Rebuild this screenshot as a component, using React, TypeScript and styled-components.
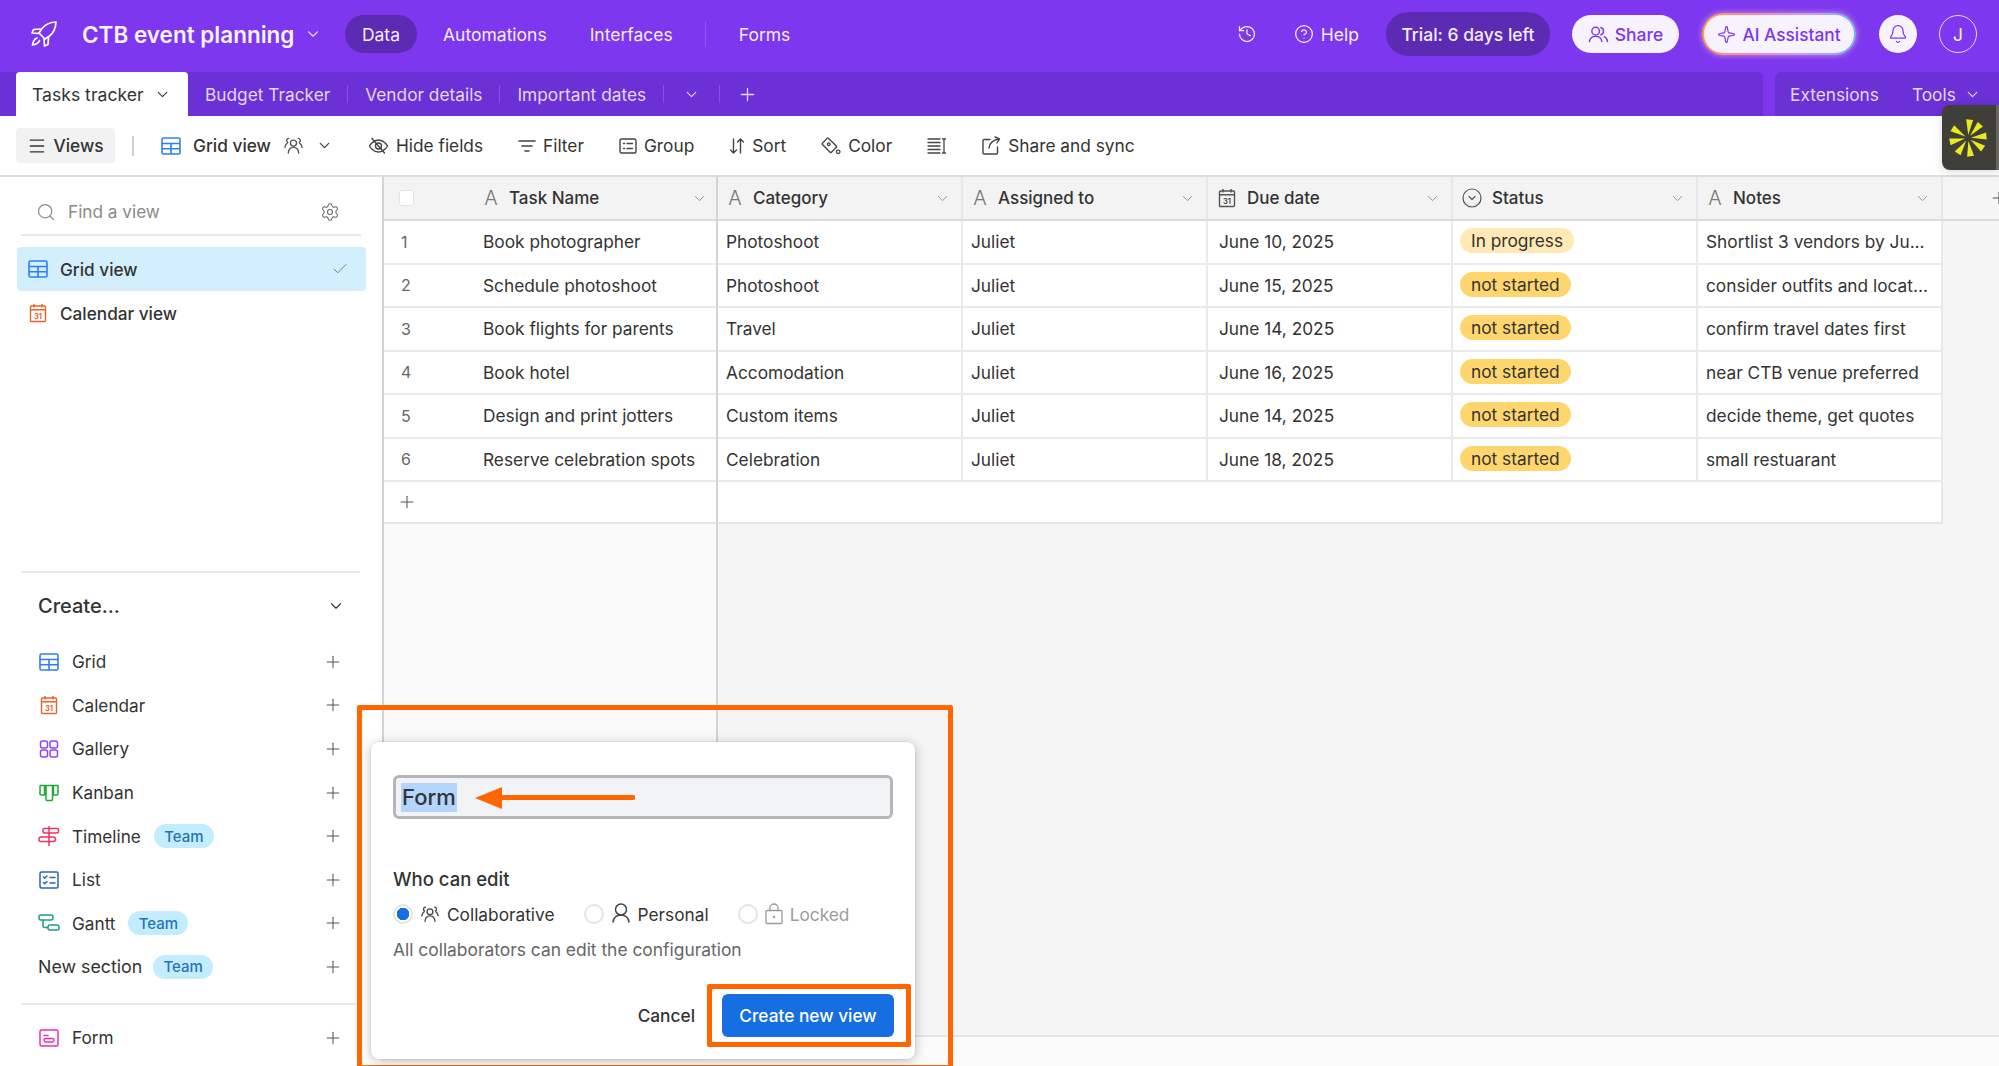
import React from "react";
import styled, { createGlobalStyle } from "styled-components";
import {
  Bell,
  Check,
  ChevronDown,
  CircleHelp,
  History,
  Menu,
  Plus,
  Search,
  Settings,
  Sparkle,
} from "lucide-react";

const GlobalStyle = createGlobalStyle`
  html, body {
    margin: 0;
    height: 100%;
    overflow: hidden;
    font-family: Inter, "Liberation Sans", sans-serif;
    color: #333;
  }
  * { box-sizing: border-box; }
`;

/* ---------- drawn icons ---------- */

const RocketLogo = () => (
  <svg width="28" height="28" viewBox="0 0 28 28" fill="none" stroke="#fff" strokeWidth="1.7" strokeLinejoin="round" strokeLinecap="round">
    <path d="M26 2c-6 .3-10.500 2-14 6.500L9 13l6 6 4.500-3C24 12.500 25.700 8 26 2Z" />
    <path d="M10.500 9 3.500 9.500 2 13l7 0.500" />
    <path d="M18.500 17.500 18 24.500 14.500 26l-.5-7" />
    <path d="M7 18c-2.500 1-4 3.500-4.500 7C6 24.500 8.500 23 9.500 20.500" />
  </svg>
);

const Collab = ({ size = 21, color = "#555" }: { size?: number; color?: string }) => (
  <svg width={size} height={size} viewBox="0 0 22 22" fill="none" stroke={color} strokeWidth="1.4" strokeLinecap="round" strokeLinejoin="round">
    <circle cx="11" cy="8.500" r="3.200" />
    <path d="M5.500 19c.3-3.500 2.500-6 5.500-6s5.200 2.500 5.500 6" />
    <path d="M6 3.500a2.300 2.300 0 0 0-1 4.300M2 13c.3-2 1.200-3.500 2.500-4.300" />
    <path d="M16 3.500a2.300 2.300 0 0 1 1 4.300M20 13c-.3-2-1.200-3.500-2.500-4.300" />
  </svg>
);

const PersonGlyph = () => (
  <svg width="20" height="24" viewBox="0 0 20 24" fill="none" stroke="#444" strokeWidth="1.500" strokeLinecap="round">
    <circle cx="10" cy="7.500" r="5.500" />
    <path d="M2 20c.8-4.500 3.800-7 8-7s7.200 2.500 8 7" />
  </svg>
);

const LockGlyph = () => (
  <svg width="18" height="24" viewBox="0 0 18 24" fill="none" stroke="#9b9b9b" strokeWidth="1.300" strokeLinecap="round">
    <rect x="1" y="8.500" width="16" height="13" rx="1" />
    <path d="M5 8.500V6a4 4 0 0 1 8 0v2.500" />
    <circle cx="9" cy="15" r=".6" fill="#9b9b9b" />
  </svg>
);

const ShareUsers = () => (
  <svg width="21" height="18" viewBox="0 0 22 18" fill="none" stroke="#7c37ef" strokeWidth="1.5" strokeLinecap="round">
    <circle cx="8" cy="6" r="4" />
    <path d="M1.500 17c.4-3.500 3-5.500 6.500-5.500s6.100 2 6.500 5.500" />
    <path d="M13.500 2.200a4 4 0 0 1 0 7.600M17 11.800c2 .9 3.200 2.700 3.500 5.200" />
  </svg>
);

const GridGlyph = ({ size = 20 }: { size?: number }) => (
  <svg width={size} height={size} viewBox="0 0 20 20" fill="none" stroke="#2d7ff9" strokeWidth="1.600">
    <rect x="1" y="2" width="18" height="16" rx="1.500" />
    <path d="M1 7.500h18M1 12.700h18M10 7.500V18" />
  </svg>
);

const CalendarGlyph = ({ color = "#e8622c", size = 20 }: { color?: string; size?: number }) => (
  <svg width={size} height={size} viewBox="0 0 20 20" fill="none" stroke={color} strokeWidth="1.400">
    <rect x="2.500" y="3" width="15" height="15.500" rx="1" />
    <path d="M2.500 6.800h15M6 1v3.500M14 1v3.500" />
    <text x="10" y="15.800" textAnchor="middle" fontSize="7.500" fontWeight="700" fill={color} stroke="none" fontFamily="Inter, sans-serif">31</text>
  </svg>
);

const GalleryGlyph = () => (
  <svg width="20" height="20" viewBox="0 0 20 20" fill="none" stroke="#8b46ff" strokeWidth="1.500">
    <rect x="1.500" y="2" width="7" height="7" rx="2" />
    <rect x="11" y="2" width="7.500" height="7" rx="2" />
    <rect x="1.500" y="11" width="7" height="7" rx="2" />
    <rect x="11" y="11" width="7.500" height="7" rx="2" />
  </svg>
);

const KanbanGlyph = () => (
  <svg width="20" height="20" viewBox="0 0 20 20" fill="none" stroke="#20a933" strokeWidth="1.500" strokeLinejoin="round">
    <path d="M1 2.500h18v8.500a1 1 0 0 1-1 1h-3.500V2.500M5.500 2.500V12H2a1 1 0 0 1-1-1V2.500M7 2.500v14a1 1 0 0 0 1 1h4.500a1 1 0 0 0 1-1v-14" />
  </svg>
);

const TimelineGlyph = () => (
  <svg width="22" height="22" viewBox="0 0 22 22" fill="none" stroke="#f0325f" strokeWidth="1.500" strokeLinejoin="round">
    <path d="M11 1v20" />
    <rect x="5" y="3.500" width="15.500" height="4.500" rx="1.500" />
    <path d="M1 14.500a2 2 0 0 1 2-2.500h12.500a2 2 0 0 1 2 2.200 2 2 0 0 1-2 2.300H3a2 2 0 0 1-2-2Z" />
  </svg>
);

const ListGlyph = () => (
  <svg width="20" height="20" viewBox="0 0 20 20" fill="none" stroke="#2f5fc4" strokeWidth="1.500" strokeLinecap="round">
    <rect x="1" y="2" width="18" height="16" rx="1.500" />
    <path d="m4.500 7 1.200 1.200L8 6M4.500 12.500l1.200 1.200 2.300-2.200M11 7.500h5M11 13h5" />
  </svg>
);

const GanttGlyph = () => (
  <svg width="22" height="20" viewBox="0 0 22 20" fill="none" stroke="#1f9b8e" strokeWidth="1.500">
    <rect x="1" y="2" width="14" height="5" rx="2" />
    <rect x="10" y="12" width="11" height="5" rx="2" />
    <path d="M5 7v5.500a2 2 0 0 0 2 2h3" />
  </svg>
);

const FormGlyph = () => (
  <svg width="20" height="20" viewBox="0 0 20 20" fill="none" stroke="#ec2fb4" strokeWidth="1.500" strokeLinecap="round">
    <rect x="1" y="2" width="18" height="16" rx="1.500" />
    <path d="M5 7.500h4" />
    <rect x="5" y="10.500" width="10" height="3.500" rx="1.700" />
  </svg>
);

const HideGlyph = () => (
  <svg width="21" height="20" viewBox="0 0 21 20" fill="none" stroke="#444" strokeWidth="1.400" strokeLinecap="round">
    <path d="M1.500 10s3.200-6 9-6 9 6 9 6-3.200 6-9 6-9-6-9-6Z" />
    <circle cx="10.500" cy="10" r="3" />
    <path d="M4 2.500 16.500 17" />
  </svg>
);

const FilterGlyph = () => (
  <svg width="18" height="16" viewBox="0 0 18 16" fill="none" stroke="#444" strokeWidth="1.600" strokeLinecap="round">
    <path d="M1 3h16M4 8h10M7 13h4" />
  </svg>
);

const GroupGlyph = () => (
  <svg width="18" height="18" viewBox="0 0 18 18" fill="none" stroke="#444" strokeWidth="1.400" strokeLinecap="round">
    <rect x="1" y="2" width="16" height="14" rx="1.500" />
    <path d="M4.500 6.500h1M8 6.500h5.500M4.500 11.500h1M8 11.500h5.500" />
  </svg>
);

const SortGlyph = () => (
  <svg width="16" height="18" viewBox="0 0 16 18" fill="none" stroke="#444" strokeWidth="1.400" strokeLinecap="round" strokeLinejoin="round">
    <path d="M4.500 2v14M1.500 13l3 3 3-3M11.500 16V2M8.500 5l3-3 3 3" />
  </svg>
);

const ColorGlyph = () => (
  <svg width="20" height="18" viewBox="0 0 22 20" fill="none" stroke="#444" strokeWidth="1.500" strokeLinejoin="round">
    <path d="M6.500 1.500 1.500 7a1 1 0 0 0 0 1.400l8.500 8.600a1 1 0 0 0 1.400 0l5.600-5.500a1 1 0 0 0 0-1.400L8 1.500a1 1 0 0 0-1.500 0Z" />
    <circle cx="8.500" cy="8" r="1.500" />
    <circle cx="19" cy="16.500" r="2" />
  </svg>
);

const RowHeightGlyph = () => (
  <svg width="20" height="18" viewBox="0 0 20 18" fill="none" stroke="#444" strokeWidth="1.300" strokeLinecap="round">
    <path d="M1 2h12M1 5.500h12M1 9h12M1 12.500h12M1 16h12M17 2v14M15.500 2h3M15.500 16h3" />
  </svg>
);

const ShareGlyph = () => (
  <svg width="19" height="19" viewBox="0 0 19 19" fill="none" stroke="#444" strokeWidth="1.400" strokeLinecap="round" strokeLinejoin="round">
    <path d="M8 3.500H2a1 1 0 0 0-1 1V17a1 1 0 0 0 1 1h12.500a1 1 0 0 0 1-1v-6" />
    <path d="M7 12c.5-4.500 3.500-8 10-9M13 1l4.500 2L15 7" />
  </svg>
);

const StatusGlyph = () => (
  <svg width="20" height="20" viewBox="0 0 20 20" fill="none" stroke="#555" strokeWidth="1.200" strokeLinecap="round" strokeLinejoin="round">
    <circle cx="10" cy="10" r="9" />
    <path d="m7 8.500 3 3 3-3" />
  </svg>
);

const SPOKES = [5, 42, 84, 125, 172, 214, 258, 302];

const Spark = () => (
  <svg width="40" height="40" viewBox="-20 -20 40 40" fill="#e9e91b">
    {SPOKES.map((angle) => (
      <polygon key={angle} points="0,-3 -3.500,-18.500 3.500,-18.500" transform={`rotate(${angle})`} />
    ))}
  </svg>
);

/* ---------- chrome ---------- */

const Page = styled.div`
  position: relative;
  height: 100vh;
  display: flex;
  flex-direction: column;
  overflow: hidden;
  background: #fff;
`;

const TopBar = styled.header`
  height: 72px;
  flex: none;
  display: flex;
  align-items: center;
  padding: 0 22px 4px 30px;
  background: #7c37ef;
  color: #f3edfe;
  font-size: 17.500px;
`;

const Title = styled.div`
  margin-left: 24px;
  font-size: 22.500px;
  font-weight: 600;
  color: #f7f3fe;
  white-space: nowrap;
`;

const TitleChevron = styled(ChevronDown)`
  margin: 0 23px 0 10px;
  color: #e6dbfb;
`;

const Nav = styled.nav`
  display: flex;
  align-items: center;
  gap: 10px;
`;

const NavItem = styled.div<{ $active?: boolean }>`
  height: 38px;
  display: flex;
  align-items: center;
  padding: 0 16.500px;
  border-radius: 19px;
  background: ${(p) => (p.$active ? "#5b2bb3" : "transparent")};
`;

const NavSep = styled.div`
  width: 1px;
  height: 26px;
  margin: 0 6px;
  background: #8f57f1;
`;

const TopRight = styled.div`
  margin-left: auto;
  display: flex;
  align-items: center;
`;

const HelpLink = styled.div`
  display: flex;
  align-items: center;
  gap: 7px;
  margin: 0 27px 0 37px;
`;

const TrialPill = styled.div`
  height: 44px;
  width: 164px;
  display: flex;
  align-items: center;
  justify-content: center;
  border-radius: 22px;
  background: #5b2bb3;
  font-weight: 500;
  margin-right: 22px;
`;

const LightPill = styled.div`
  height: 38px;
  width: 107px;
  display: flex;
  align-items: center;
  justify-content: center;
  gap: 6px;
  border-radius: 19px;
  background: #f7f3fe;
  color: #7c37ef;
  font-weight: 500;
  margin-right: 23px;
`;

const AiPill = styled(LightPill)`
  height: 42px;
  width: 154px;
  border-radius: 21px;
  border: 2.500px solid transparent;
  background: linear-gradient(#f7f3fe, #f7f3fe) padding-box,
    linear-gradient(100deg, #ff9a4d, #ff86a8, #c59cff, #6db5ff) border-box;
  box-shadow: 0 0 6px rgba(255, 190, 210, 0.7);
  font-size: 17.300px;
`;

const RoundButton = styled.div<{ $outline?: boolean }>`
  width: 38px;
  height: 38px;
  display: flex;
  align-items: center;
  justify-content: center;
  border-radius: 50%;
  background: ${(p) => (p.$outline ? "transparent" : "#f7f3fe")};
  border: ${(p) => (p.$outline ? "1.500px solid #e6dbfb" : "none")};
  color: ${(p) => (p.$outline ? "#f7f3fe" : "#7c37ef")};
  margin-left: ${(p) => (p.$outline ? "22px" : "0")};
`;

const TabBar = styled.div`
  height: 44px;
  flex: none;
  display: flex;
  background: #7c37ef;
  font-size: 17.300px;
`;

const TabStrip = styled.div`
  flex: 1;
  display: flex;
  align-items: center;
  padding-left: 16px;
  background: #6b30d6;
  border-top-right-radius: 6px;
  color: #e4d8f9;
`;

const ActiveTab = styled.div`
  height: 44px;
  width: 172px;
  display: flex;
  align-items: center;
  gap: 10px;
  padding-left: 16px;
  background: #fff;
  color: #333;
  border-radius: 4px 4px 0 0;
  font-size: 17.600px;
`;

const Tab = styled.div`
  display: flex;
  align-items: center;
  height: 44px;
  padding: 0 17px;
  white-space: nowrap;
`;

const TabSep = styled.div`
  width: 1px;
  height: 18px;
  background: #8653e0;
`;

const TabTool = styled(Tab)`
  width: 55px;
  justify-content: center;
  padding: 0;
`;

const ToolsPanel = styled.div`
  width: 224px;
  margin-left: 12px;
  display: flex;
  align-items: center;
  gap: 33px;
  padding-left: 15px;
  background: #6b30d6;
  border-top-left-radius: 6px;
  color: #e4d8f9;
`;

const ToolsMenu = styled.div`
  display: flex;
  align-items: center;
  gap: 8px;
`;

const Toolbar = styled.div`
  height: 61px;
  flex: none;
  display: flex;
  align-items: center;
  padding: 0 16px;
  border-bottom: 2px solid #dedede;
  font-size: 17.300px;
  color: #333;
`;

const ViewsButton = styled.div`
  width: 99px;
  height: 35px;
  display: flex;
  align-items: center;
  justify-content: center;
  gap: 6px;
  border-radius: 4px;
  background: #f2f2f2;
  font-weight: 500;
`;

const ToolSep = styled.div`
  width: 2px;
  height: 20px;
  margin: 0 27px 0 17px;
  background: #cfcfcf;
`;

const ViewName = styled.div`
  display: flex;
  align-items: center;
  gap: 12px;
  font-weight: 500;
  margin-right: 35px;
  white-space: nowrap;
`;

const ToolGroup = styled.div`
  display: flex;
  align-items: center;
  gap: 35px;
`;

const ToolButton = styled.div`
  display: flex;
  align-items: center;
  gap: 7px;
  white-space: nowrap;
`;

const SparkTab = styled.div`
  position: absolute;
  top: 105px;
  right: 0;
  width: 57px;
  height: 65px;
  display: flex;
  align-items: center;
  justify-content: center;
  padding-right: 3px;
  background: #3f3e39;
  border-right: 3px solid #66655f;
  border-radius: 8px 0 0 8px;
  box-shadow: 0 2px 8px rgba(0, 0, 0, 0.15);
`;

/* ---------- sidebar ---------- */

const Body = styled.div`
  flex: 1;
  min-height: 0;
  display: flex;
`;

const Sidebar = styled.aside`
  width: 382px;
  flex: none;
  display: flex;
  flex-direction: column;
  font-size: 17.200px;
`;

const ViewsPane = styled.div`
  height: 394px;
  flex: none;
`;

const SearchRow = styled.div`
  height: 59px;
  margin: 0 21px 11px;
  display: flex;
  align-items: center;
  gap: 12px;
  padding: 12px 21px 0 15px;
  border-bottom: 2px solid #e9e9e9;
  color: #8a8a8a;
`;

const GearIcon = styled(Settings)`
  margin-left: auto;
  color: #666;
`;

const ViewRow = styled.div<{ $active?: boolean }>`
  height: 44px;
  margin: 0 16px 0 17px;
  display: flex;
  align-items: center;
  gap: 12px;
  padding: 0 17px 0 11px;
  border-radius: 4px;
  font-weight: 500;
  background: ${(p) => (p.$active ? "#d3effd" : "transparent")};
`;

const CheckIcon = styled(Check)`
  margin-left: auto;
  color: #777;
`;

const CreatePane = styled.div`
  margin: 0 22px 0 21px;
  border-top: 2px solid #e9e9e9;
`;

const CreateHead = styled.div`
  height: 67px;
  display: flex;
  align-items: center;
  justify-content: space-between;
  padding: 0 15px 1px 17px;
  font-size: 20px;
  font-weight: 500;
`;

const CreateRow = styled.div`
  height: 43.600px;
  display: flex;
  align-items: center;
  gap: 12px;
  padding-left: 17px;
  padding-right: 17px;
  color: #333;
`;

const CreateIcon = styled.span`
  width: 22px;
  display: flex;
  justify-content: center;
  flex: none;
`;

const SectionLabel = styled.span`
  font-size: 17.800px;
`;

const TeamBadge = styled.span<{ $tight?: boolean }>`
  width: 60px;
  height: 24px;
  margin-left: ${(p) => (p.$tight ? "-1px" : "1px")};
  display: flex;
  align-items: center;
  justify-content: center;
  border-radius: 12px;
  background: #c4ecff;
  color: #2474b5;
  font-size: 15px;
  font-weight: 500;
`;

const RowPlus = styled(Plus)`
  margin-left: auto;
  color: #555;
  flex: none;
`;

const FormBlock = styled.div`
  margin-top: 14px;
  padding-top: 11px;
  border-top: 2px solid #e9e9e9;
`;

/* ---------- grid ---------- */

const Main = styled.main`
  flex: 1;
  min-width: 0;
  display: flex;
  flex-direction: column;
  background: #f5f5f5;
  font-size: 17.300px;
`;

const GridArea = styled.div`
  flex: 1;
  min-height: 0;
  display: flex;
`;

const FrozenPane = styled.div`
  width: 336px;
  flex: none;
  background: #fafafa;
  border-left: 2px solid #d4d4d4;
  border-right: 2px solid #d4d4d4;
`;

const ScrollPane = styled.div`
  flex: 1;
  min-width: 0;
  overflow: hidden;
`;

const HeadRow = styled.div`
  height: 44px;
  display: flex;
  background: #f3f3f3;
  border-bottom: 2px solid #dcdcdc;
`;

const HeadCell = styled.div<{ $frozen?: boolean }>`
  width: ${(p) => (p.$frozen ? "100%" : "245px")};
  flex: none;
  display: flex;
  align-items: center;
  gap: 10px;
  padding: 0 ${(p) => (p.$frozen ? "8px" : "10px")} 0 ${(p) => (p.$frozen ? "99px" : "9px")};
  border-right: ${(p) => (p.$frozen ? "none" : "2px solid #e6e7e8")};
  font-weight: 500;
  font-size: 17px;
  white-space: nowrap;
  position: relative;
`;

const FieldA = styled.span`
  width: 16px;
  font-size: 20px;
  font-weight: 300;
  color: #777;
  text-align: center;
`;

const HeadChevron = styled(ChevronDown)`
  margin-left: auto;
  color: #8a8a8a;
`;

const HeadCheck = styled.span`
  position: absolute;
  left: 15px;
  top: 13px;
  width: 15px;
  height: 16px;
  border-radius: 3px;
  background: #fff;
  border: 1px solid #e4e4e4;
`;

const AddColumn = styled.div`
  flex: 1;
  display: flex;
  align-items: center;
  justify-content: flex-end;
  overflow: hidden;
  background: #f5f5f5;
  color: #555;
`;

const AddColumnPlus = styled(Plus)`
  margin-right: -10px;
  flex: none;
`;

const FrozenRow = styled.div`
  height: 43.500px;
  display: flex;
  align-items: center;
  background: #fff;
  border-bottom: 2px solid #e9eaea;
  white-space: nowrap;
`;

const RowNumber = styled.span`
  width: 99px;
  padding-left: 17px;
  flex: none;
  color: #666;
  font-size: 16px;
`;

const AddRow = styled.div`
  height: 41.500px;
  display: flex;
  align-items: center;
  padding-left: 13px;
  background: #fff;
  border-bottom: 2px solid #e4e5e5;
  color: #555;
`;

const ScrollRow = styled.div`
  width: 1225px;
  height: 43.500px;
  display: flex;
  background: #fff;
  border-bottom: 2px solid #e9eaea;
`;

const AddRowBlank = styled.div`
  width: 1225px;
  height: 41.500px;
  background: #fff;
  border-bottom: 2px solid #e4e5e5;
  border-right: 2px solid #e6e7e8;
`;

const Cell = styled.div<{ $inset?: number }>`
  width: 245px;
  flex: none;
  display: flex;
  align-items: center;
  padding: 0 8px 0 ${(p) => p.$inset ?? 8}px;
  border-right: 2px solid #e9eaea;
  min-width: 0;
`;

const CellText = styled.span`
  white-space: nowrap;
`;

const Chip = styled.span<{ $light?: boolean }>`
  height: 25px;
  display: inline-flex;
  align-items: center;
  padding: 0 11px;
  margin: 0 0 2px -1px;
  border-radius: 12.500px;
  background: ${(p) => (p.$light ? "#ffeab6" : "#ffd66e")};
  white-space: nowrap;
`;

const GridFooter = styled.div`
  height: 31px;
  flex: none;
  background: #fbfbfb;
  border-top: 2px solid #e1e6e6;
`;

/* ---------- annotated popover ---------- */

const Callout = styled.div`
  position: absolute;
  left: 357px;
  top: 705px;
  width: 596px;
  height: 365px;
  padding: 32px 0 0 9px;
  border: 5px solid #ff6600;
  border-radius: 2px;
`;

const Popover = styled.div`
  width: 544px;
  height: 317px;
  padding: 33px 22px 0 22px;
  background: #fff;
  border-radius: 8px;
  box-shadow: 0 0 0 1px rgba(0, 0, 0, 0.04), 0 2px 12px rgba(0, 0, 0, 0.25);
  font-size: 17.300px;
`;

const NameField = styled.div`
  position: relative;
  height: 44px;
  display: flex;
  align-items: center;
  padding-left: 5px;
  background: #f2f3f7;
  border: 3px solid #b5b5bb;
  border-radius: 6px;
  font-size: 22px;
  font-weight: 500;
`;

const Selected = styled.span`
  padding: 0 1px;
  line-height: 29px;
  background: #b3d4fd;
`;

const FieldArrow = styled.svg`
  position: absolute;
  left: 79px;
  top: 8px;
`;

const WhoLabel = styled.div`
  margin-top: 49px;
  font-size: 18.500px;
  font-weight: 500;
  line-height: 22px;
`;

const RadioRow = styled.div`
  margin-top: 12px;
  display: flex;
  align-items: center;
  height: 24px;
`;

const RadioOption = styled.div<{ $disabled?: boolean }>`
  display: flex;
  align-items: center;
  gap: 7px;
  margin-right: 29px;
  color: ${(p) => (p.$disabled ? "#9b9b9b" : "#333")};
`;

const Radio = styled.span<{ $on?: boolean }>`
  width: 20px;
  height: 20px;
  flex: none;
  border-radius: 50%;
  border: 2px solid #e5e5e5;
  background: ${(p) => (p.$on ? "radial-gradient(circle, #166ee1 0 6px, #fff 6.500px)" : "#fff")};
`;

const HelpText = styled.div`
  margin-top: 13px;
  font-size: 17.400px;
  color: #666;
  line-height: 22px;
`;

const PopActions = styled.div`
  margin-top: 23px;
  margin-right: -18px;
  display: flex;
  align-items: center;
  justify-content: flex-end;
  gap: 12px;
`;

const CancelLink = styled.span`
  font-weight: 500;
  color: #333;
`;

const ButtonHighlight = styled.div`
  padding: 5px 12px 5px 10px;
  border: 5px solid #ff6600;
  border-radius: 2px;
`;

const CreateButton = styled.div`
  width: 172px;
  height: 43px;
  display: flex;
  align-items: center;
  justify-content: center;
  border-radius: 6px;
  background: #166ee1;
  color: #fff;
  font-weight: 500;
`;

/* ---------- data ---------- */

const rows = [
  ["Book photographer", "Photoshoot", "June 10, 2025", "In progress", "Shortlist 3 vendors by Ju..."],
  ["Schedule photoshoot", "Photoshoot", "June 15, 2025", "not started", "consider outfits and locat..."],
  ["Book flights for parents", "Travel", "June 14, 2025", "not started", "confirm travel dates first"],
  ["Book hotel", "Accomodation", "June 16, 2025", "not started", "near CTB venue preferred"],
  ["Design and print jotters", "Custom items", "June 14, 2025", "not started", "decide theme, get quotes"],
  ["Reserve celebration spots", "Celebration", "June 18, 2025", "not started", "small restuarant"],
];

const createItems: { label: string; icon: React.ReactNode; team?: boolean }[] = [
  { label: "Grid", icon: <GridGlyph /> },
  { label: "Calendar", icon: <CalendarGlyph /> },
  { label: "Gallery", icon: <GalleryGlyph /> },
  { label: "Kanban", icon: <KanbanGlyph /> },
  { label: "Timeline", icon: <TimelineGlyph />, team: true },
  { label: "List", icon: <ListGlyph /> },
  { label: "Gantt", icon: <GanttGlyph />, team: true },
];

const App = () => (
  <Page>
    <GlobalStyle />
    <TopBar>
      <RocketLogo />
      <Title>CTB event planning</Title>
      <TitleChevron size={18} strokeWidth={1.5} />
      <Nav>
        <NavItem $active>Data</NavItem>
        <NavItem>Automations</NavItem>
        <NavItem>Interfaces</NavItem>
        <NavSep />
        <NavItem>Forms</NavItem>
      </Nav>
      <TopRight>
        <History size={20} strokeWidth={1.5} />
        <HelpLink>
          <CircleHelp size={20} strokeWidth={1.5} />
          Help
        </HelpLink>
        <TrialPill>Trial: 6 days left</TrialPill>
        <LightPill>
          <ShareUsers />
          Share
        </LightPill>
        <AiPill>
          <Sparkle size={19} strokeWidth={1.5} />
          AI Assistant
        </AiPill>
        <RoundButton>
          <Bell size={20} strokeWidth={1.5} />
        </RoundButton>
        <RoundButton $outline>J</RoundButton>
      </TopRight>
    </TopBar>

    <TabBar>
      <TabStrip>
        <ActiveTab>
          Tasks tracker
          <ChevronDown size={17} strokeWidth={1.5} />
        </ActiveTab>
        <Tab>Budget Tracker</Tab>
        <TabSep />
        <Tab>Vendor details</Tab>
        <TabSep />
        <Tab>Important dates</Tab>
        <TabSep />
        <TabTool>
          <ChevronDown size={17} strokeWidth={1.5} />
        </TabTool>
        <TabSep />
        <TabTool>
          <Plus size={21} strokeWidth={1.5} />
        </TabTool>
      </TabStrip>
      <ToolsPanel>
        Extensions
        <ToolsMenu>
          Tools
          <ChevronDown size={17} strokeWidth={1.5} />
        </ToolsMenu>
      </ToolsPanel>
    </TabBar>

    <Toolbar>
      <ViewsButton>
        <Menu size={20} strokeWidth={1.6} />
        Views
      </ViewsButton>
      <ToolSep />
      <ViewName>
        <GridGlyph />
        Grid view
        <Collab />
        <ChevronDown size={17} strokeWidth={1.5} />
      </ViewName>
      <ToolGroup>
        <ToolButton>
          <HideGlyph />
          Hide fields
        </ToolButton>
        <ToolButton>
          <FilterGlyph />
          Filter
        </ToolButton>
        <ToolButton>
          <GroupGlyph />
          Group
        </ToolButton>
        <ToolButton>
          <SortGlyph />
          Sort
        </ToolButton>
        <ToolButton>
          <ColorGlyph />
          Color
        </ToolButton>
        <ToolButton>
          <RowHeightGlyph />
        </ToolButton>
        <ToolButton>
          <ShareGlyph />
          Share and sync
        </ToolButton>
      </ToolGroup>
    </Toolbar>

    <Body>
      <Sidebar>
        <ViewsPane>
          <SearchRow>
            <Search size={20} strokeWidth={1.5} />
            Find a view
            <GearIcon size={20} strokeWidth={1.25} />
          </SearchRow>
          <ViewRow $active>
            <GridGlyph />
            Grid view
            <CheckIcon size={18} strokeWidth={1.25} />
          </ViewRow>
          <ViewRow>
            <CalendarGlyph />
            Calendar view
          </ViewRow>
        </ViewsPane>
        <CreatePane>
          <CreateHead>
            Create...
            <ChevronDown size={18} strokeWidth={1.5} />
          </CreateHead>
          {createItems.map((item) => (
            <CreateRow key={item.label}>
              <CreateIcon>{item.icon}</CreateIcon>
              {item.label}
              {item.team && <TeamBadge>Team</TeamBadge>}
              <RowPlus size={20} strokeWidth={1.25} />
            </CreateRow>
          ))}
          <CreateRow>
            <SectionLabel>New section</SectionLabel>
            <TeamBadge $tight>Team</TeamBadge>
            <RowPlus size={20} strokeWidth={1.25} />
          </CreateRow>
          <FormBlock>
            <CreateRow>
              <CreateIcon>
                <FormGlyph />
              </CreateIcon>
              Form
              <RowPlus size={20} strokeWidth={1.25} />
            </CreateRow>
          </FormBlock>
        </CreatePane>
      </Sidebar>

      <Main>
        <GridArea>
          <FrozenPane>
            <HeadRow>
              <HeadCell $frozen>
                <HeadCheck />
                <FieldA>A</FieldA>
                Task Name
                <HeadChevron size={17} strokeWidth={1.25} />
              </HeadCell>
            </HeadRow>
            {rows.map((row, i) => (
              <FrozenRow key={row[0]}>
                <RowNumber>{i + 1}</RowNumber>
                {row[0]}
              </FrozenRow>
            ))}
            <AddRow>
              <Plus size={20} strokeWidth={1.25} />
            </AddRow>
          </FrozenPane>
          <ScrollPane>
            <HeadRow>
              <HeadCell>
                <FieldA>A</FieldA>
                Category
                <HeadChevron size={17} strokeWidth={1.25} />
              </HeadCell>
              <HeadCell>
                <FieldA>A</FieldA>
                Assigned to
                <HeadChevron size={17} strokeWidth={1.25} />
              </HeadCell>
              <HeadCell>
                <CalendarGlyph color="#555" size={20} />
                Due date
                <HeadChevron size={17} strokeWidth={1.25} />
              </HeadCell>
              <HeadCell>
                <StatusGlyph />
                Status
                <HeadChevron size={17} strokeWidth={1.25} />
              </HeadCell>
              <HeadCell>
                <FieldA>A</FieldA>
                Notes
                <HeadChevron size={17} strokeWidth={1.25} />
              </HeadCell>
              <AddColumn>
                <AddColumnPlus size={20} strokeWidth={1.25} />
              </AddColumn>
            </HeadRow>
            {rows.map((row) => (
              <ScrollRow key={row[0]}>
                <Cell>
                  <CellText>{row[1]}</CellText>
                </Cell>
                <Cell>
                  <CellText>Juliet</CellText>
                </Cell>
                <Cell $inset={11}>
                  <CellText>{row[2]}</CellText>
                </Cell>
                <Cell>
                  <Chip $light={row[3] === "In progress"}>{row[3]}</Chip>
                </Cell>
                <Cell>
                  <CellText>{row[4]}</CellText>
                </Cell>
              </ScrollRow>
            ))}
            <AddRowBlank />
          </ScrollPane>
        </GridArea>
        <GridFooter />
      </Main>
    </Body>

    <SparkTab>
      <Spark />
    </SparkTab>

    <Callout>
      <Popover>
        <NameField>
          <Selected>Form</Selected>
          <FieldArrow width="160" height="24" viewBox="0 0 160 24">
            <path d="M0 12 27 1v8h131a2.500 2.500 0 0 1 0 5H27v9Z" fill="#ff6600" />
          </FieldArrow>
        </NameField>
        <WhoLabel>Who can edit</WhoLabel>
        <RadioRow>
          <RadioOption>
            <Radio $on />
            <Collab size={20} color="#444" />
            Collaborative
          </RadioOption>
          <RadioOption>
            <Radio />
            <PersonGlyph />
            Personal
          </RadioOption>
          <RadioOption $disabled>
            <Radio />
            <LockGlyph />
            Locked
          </RadioOption>
        </RadioRow>
        <HelpText>All collaborators can edit the configuration</HelpText>
        <PopActions>
          <CancelLink>Cancel</CancelLink>
          <ButtonHighlight>
            <CreateButton>Create new view</CreateButton>
          </ButtonHighlight>
        </PopActions>
      </Popover>
    </Callout>
  </Page>
);

export default App;
